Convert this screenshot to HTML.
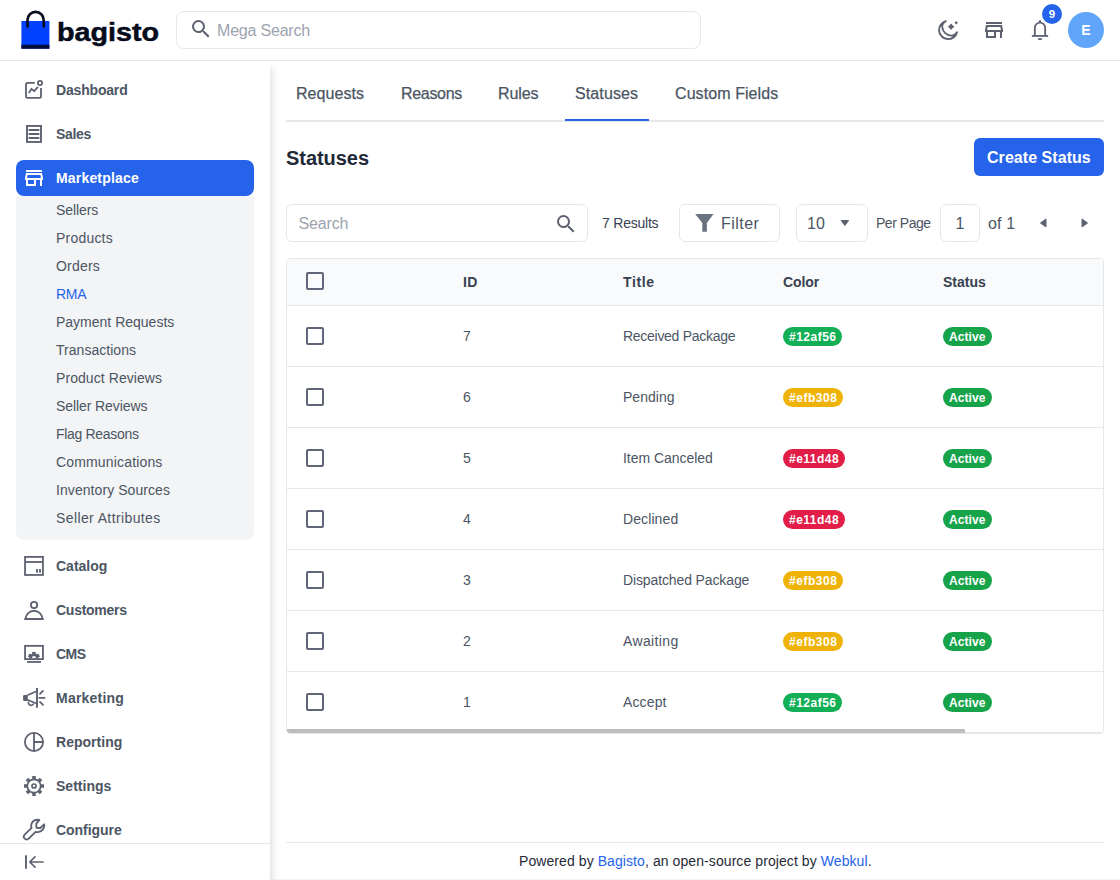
<!DOCTYPE html>
<html lang="en">
<head>
<meta charset="utf-8">
<title>Statuses - RMA - Marketplace</title>
<style>
*{box-sizing:border-box;margin:0;padding:0}
html,body{width:1120px;height:880px;overflow:hidden;background:#fff}
body{font-family:"Liberation Sans",sans-serif;font-size:14px;color:#4b5563;position:relative}
a{text-decoration:none;color:inherit}
.abs{position:absolute;white-space:nowrap}
.header{position:absolute;left:0;top:0;width:1120px;height:61px;background:#fff;border-bottom:1px solid #e5e7eb;z-index:5}
.logo-text{position:absolute;left:56.5px;top:11.5px;font-weight:700;font-size:26px;line-height:40px;color:#060c1b;-webkit-text-stroke:0.5px #060c1b;transform:scaleX(1.105);transform-origin:0 0}
.mega{position:absolute;left:176px;top:11px;width:525px;height:38px;border:1px solid #e5e7eb;border-radius:8px}
.mega span{position:absolute;left:40px;top:8.5px;font-size:16px;line-height:20px;color:#9ca3af}
.hicon{position:absolute;top:18px;width:24px;height:24px}
.badge9{position:absolute;left:1042px;top:4px;width:20px;height:20px;border-radius:10px;background:#2563eb;color:#fff;font-weight:700;font-size:11.5px;line-height:21px;text-align:center}
.avatar{position:absolute;left:1068px;top:12px;width:36px;height:36px;border-radius:18px;background:#60a5fa;color:#fff;font-weight:700;font-size:14px;line-height:36px;text-align:center}
.sidebar{position:absolute;left:0;top:61px;width:270px;height:819px;background:#fff;box-shadow:0 8px 10px 0 rgba(0,0,0,.2);z-index:4}
.nav-item{position:absolute;left:16px;width:238px;height:36px;border-radius:8px;font-weight:700;font-size:14px;line-height:36px;color:#4b5563}
.nav-item span{position:absolute;left:40px;top:0;white-space:nowrap}
.nav-item svg{position:absolute;left:6px;top:6px}
.nav-item.active{background:#2563eb;color:#fff}
.sub{position:absolute;left:16px;top:196px;width:238px;height:344px;background:#f3f4f6;border-radius:0 0 8px 8px}
.sub a{position:absolute;left:40px;font-size:14px;line-height:20px;color:#4b5563;white-space:nowrap}
.sub a.cur{color:#2563eb}
.collapse{position:absolute;left:0;top:843px;width:270px;height:37px;border-top:1px solid #e5e7eb;background:#fff}
.tabs{position:absolute;left:286px;top:69px;width:818px;height:53px;border-bottom:2px solid #e5e7eb}
.tab{position:absolute;top:0;height:52px;padding:0 10px;font-size:16px;line-height:50px;color:#4b5563;white-space:nowrap;-webkit-text-stroke:0.25px #4b5563}
.tab.on{border-bottom:2px solid #2563eb;width:84px}
h1{position:absolute;left:286px;top:143.8px;font-size:20px;line-height:28px;font-weight:700;color:#1f2937;white-space:nowrap}
.btn{position:absolute;left:974px;top:138px;width:130px;height:38px;border-radius:6px;background:#2563eb;color:#fff;font-weight:700;font-size:16px;line-height:38px;padding-left:13px;padding-top:1px;white-space:nowrap}
.box{position:absolute;top:204px;height:38px;border:1px solid #e5e7eb;border-radius:6px;background:#fff}
.t16{font-size:16px;line-height:24px}
.t14{font-size:14px;line-height:20px}
.table{position:absolute;left:286px;top:258px;width:818px;height:476px;border:1px solid #e5e7eb;border-radius:4px;overflow:hidden;background:#fff}
.thead{position:absolute;left:0;top:0;width:816px;height:47px;background:#f9fafb;border-bottom:1px solid #e5e7eb;font-weight:700;color:#374151}
.row{position:absolute;left:0;width:816px;height:61px;border-bottom:1px solid #e5e7eb;color:#4b5563}
.cell{position:absolute;white-space:nowrap;font-size:14px;line-height:20px}
.cb{position:absolute;left:19px;width:18px;height:18px;border:2px solid #60657a;border-radius:2px;background:#fff}
.pill{position:absolute;height:19px;border-radius:9.5px;color:#fff;font-weight:700;font-size:12px;line-height:20.4px;padding:0 0 0 6px;white-space:nowrap}
.thumb{position:absolute;left:0;top:470px;width:678px;height:4px;background:#bdbdbd}
.footer{position:absolute;left:286px;top:842px;width:818px;height:38px;border-top:1px solid #e5e7eb;font-size:14px;line-height:20px;color:#1f2937}
.footer span{position:absolute;left:233px;top:8px;white-space:nowrap}
.footer a{color:#2563eb}
</style>
</head>
<body>
<div class="header">
<svg style="position:absolute;left:20px;top:8px" width="32" height="44" viewBox="0 0 32 44"><rect x="1.4" y="13" width="28" height="27.7" fill="#0041ff"/><rect x="1.4" y="36.7" width="28" height="4" fill="#060c3b"/><path d="M7.5 18.5V12a8.1 8.1 0 0 1 16.2 0v6.5" fill="none" stroke="#060c1b" stroke-width="2.6" stroke-linecap="round"/></svg>
<div class="logo-text">bagisto</div>
<div class="mega"><svg style="position:absolute;left:11.6px;top:5px" width="24" height="24" viewBox="0 0 24 24"><path d="M15.5 14h-.79l-.28-.27A6.471 6.471 0 0 0 16 9.5 6.5 6.5 0 1 0 9.5 16c1.61 0 3.09-.59 4.23-1.57l.27.28v.79l5 4.99L20.49 19l-4.99-5zm-6 0C7.01 14 5 11.99 5 9.5S7.01 5 9.5 5 14 7.01 14 9.5 11.99 14 9.5 14z" fill="#5d6170"/></svg><span style="letter-spacing:-0.2px">Mega Search</span></div>
<svg class="hicon" style="left:936px" viewBox="0 0 24 24"><path d="M9.8 3.2A9.1 9.1 0 1 0 21 14.2C19.8 16.6 17.5 17.7 15.2 17.6A9.18 9.18 0 0 1 6.2 8.7C6.1 6.5 7.6 4.3 9.8 3.2z" fill="none" stroke="#5d6170" stroke-width="1.9" stroke-linejoin="round"/><path d="M15.1 5.5Q16.3 7.6 18.4 8.8 16.3 10 15.1 12.1 13.9 10 11.8 8.8 13.9 7.6 15.1 5.5z" fill="#5d6170"/><path d="M20.2 3l1.7 1.7-1.7 1.7-1.7-1.7z" fill="#5d6170"/></svg>
<div class="hicon" style="left:982px"><svg width="24" height="24" viewBox="0 0 24 24"><path d="M18.36 9l.6 3H5.04l.6-3h12.72M20 4H4v2h16V4zm0 3H4l-1 5v2h1v6h10v-6h4v6h2v-6h1v-2l-1-5zM6 18v-4h6v4H6z" fill="#5d6170"/></svg></div>
<svg class="hicon" style="left:1028px" viewBox="0 0 24 24"><path d="M3.9 17.95h16.2" fill="none" stroke="#5d6170" stroke-width="1.8"/><path d="M6.85 17.9V9.8a5.15 5.15 0 0 1 10.3 0v8.1" fill="none" stroke="#5d6170" stroke-width="1.8"/><path d="M11 4.8V3.1a1 1 0 0 1 2 0v1.7z" fill="#5d6170"/><path d="M9.7 20.2h4.6a2.3 2.1 0 0 1-4.6 0z" fill="#5d6170"/></svg>
<div class="badge9">9</div><div class="avatar">E</div>
</div>
<div class="sidebar">
<a class="nav-item" style="top:11px"><svg width="24" height="24" viewBox="0 0 24 24"><path d="M12.8 4.9H5.6A1.6 1.6 0 0 0 4 6.5v11.8a1.6 1.6 0 0 0 1.6 1.6h11.8a1.6 1.6 0 0 0 1.6-1.6V9.9" stroke="#5d6170" fill="none" stroke-width="1.8" stroke-linecap="butt"/><circle cx="18" cy="5" r="2.1" stroke="#5d6170" fill="none" stroke-width="1.8"/><path d="M7.3 14.2l2.1-3.1 2.9 2 3-3.6" stroke="#5d6170" fill="none" stroke-width="1.8" stroke-linecap="square" stroke-linejoin="miter"/></svg><span style="letter-spacing:-0.18px">Dashboard</span></a>
<a class="nav-item" style="top:55px"><svg width="24" height="24" viewBox="0 0 24 24"><rect x="5" y="3.95" width="14" height="16" stroke="#5d6170" fill="none" stroke-width="1.9"/><path d="M7.3 8h9.4M7.3 12h9.4M7.3 16h9.4" stroke="#5d6170" fill="none" stroke-width="1.8" stroke-linecap="round" stroke-linejoin="round"/></svg><span style="letter-spacing:-0.35px">Sales</span></a>
<a class="nav-item active" style="top:99px"><svg width="24" height="24" viewBox="0 0 24 24"><path d="M18.36 9l.6 3H5.04l.6-3h12.72M20 4H4v2h16V4zm0 3H4l-1 5v2h1v6h10v-6h4v6h2v-6h1v-2l-1-5zM6 18v-4h6v4H6z" fill="#fff"/></svg><span style="letter-spacing:0.18px">Marketplace</span></a>
<a class="nav-item" style="top:487px"><svg width="24" height="24" viewBox="0 0 24 24"><rect x="3.05" y="2.9" width="17.9" height="18.05" stroke="#5d6170" fill="none" stroke-width="1.8"/><path d="M3 8h18" stroke="#5d6170" fill="none" stroke-width="1.8"/><path d="M15 15.1v3.7M18 15.1v3.7" stroke="#5d6170" fill="none" stroke-width="1.8"/></svg><span style="letter-spacing:0px">Catalog</span></a>
<a class="nav-item" style="top:531px"><svg width="24" height="24" viewBox="0 0 24 24"><circle cx="12.05" cy="7" r="3.15" stroke="#5d6170" fill="none" stroke-width="1.8"/><path d="M3.2 21C4 16.3 7.5 12.75 12 12.75S20 16.3 20.8 21z" stroke="#5d6170" fill="none" stroke-width="1.8" stroke-linejoin="miter"/></svg><span style="letter-spacing:-0.26px">Customers</span></a>
<a class="nav-item" style="top:575px"><svg width="24" height="24" viewBox="0 0 24 24"><rect x="3.05" y="3.85" width="17.9" height="13.25" stroke="#5d6170" fill="none" stroke-width="1.8"/><path d="M5 19.95h14" stroke="#5d6170" fill="none" stroke-width="1.8"/><clipPath id="cmsclip"><rect x="3.9" y="4.7" width="16.2" height="11.7"/></clipPath><g clip-path="url(#cmsclip)"><circle cx="11.95" cy="15.95" r="3.2" fill="none" stroke="#5d6170" stroke-width="2.4"/><rect x="10.15" y="9.95" width="3.6" height="2.4" fill="#5d6170"/><rect x="10.15" y="9.95" width="3.6" height="2.4" fill="#5d6170" transform="rotate(-60 11.95 15.95)"/><rect x="10.15" y="9.95" width="3.6" height="2.4" fill="#5d6170" transform="rotate(60 11.95 15.95)"/></g></svg><span style="letter-spacing:-0.54px">CMS</span></a>
<a class="nav-item" style="top:619px"><svg width="24" height="24" viewBox="0 0 24 24"><path d="M15 2v19.8" stroke="#5d6170" fill="none" stroke-width="1.9"/><path d="M14.6 5.3L5.3 9.3M5.3 13.8l9.3 3.6" stroke="#5d6170" fill="none" stroke-width="1.6"/><rect x="1.1" y="9.1" width="4.7" height="5.8" rx="1" fill="#5d6170"/><path d="M6.4 15.5c-.2 2.3.9 3.8 2.5 3.9 1.5.1 2.4-.7 2.9-1.9" stroke="#5d6170" fill="none" stroke-width="1.6"/><path d="M17.3 11.9h5.3M18 7.8l3-2.9M18 15.9l3 2.9" stroke="#5d6170" fill="none" stroke-width="1.8" stroke-linecap="round" stroke-linejoin="round"/></svg><span style="letter-spacing:0.22px">Marketing</span></a>
<a class="nav-item" style="top:663px"><svg width="24" height="24" viewBox="0 0 24 24"><circle cx="12" cy="12" r="9.1" stroke="#5d6170" fill="none" stroke-width="1.8"/><path d="M12 2.9v18.2M12 12h9.1" stroke="#5d6170" fill="none" stroke-width="1.8"/></svg><span style="letter-spacing:0.03px">Reporting</span></a>
<a class="nav-item" style="top:707px"><svg width="24" height="24" viewBox="0 0 24 24"><circle cx="12" cy="12" r="6.7" stroke="#5d6170" fill="none" stroke-width="1.7"/><rect x="10.25" y="2" width="3.5" height="3.3" fill="#5d6170" transform="rotate(0 12 12)"/><rect x="10.25" y="2" width="3.5" height="3.3" fill="#5d6170" transform="rotate(45 12 12)"/><rect x="10.25" y="2" width="3.5" height="3.3" fill="#5d6170" transform="rotate(90 12 12)"/><rect x="10.25" y="2" width="3.5" height="3.3" fill="#5d6170" transform="rotate(135 12 12)"/><rect x="10.25" y="2" width="3.5" height="3.3" fill="#5d6170" transform="rotate(180 12 12)"/><rect x="10.25" y="2" width="3.5" height="3.3" fill="#5d6170" transform="rotate(225 12 12)"/><rect x="10.25" y="2" width="3.5" height="3.3" fill="#5d6170" transform="rotate(270 12 12)"/><rect x="10.25" y="2" width="3.5" height="3.3" fill="#5d6170" transform="rotate(315 12 12)"/><circle cx="12" cy="12" r="2" stroke="#5d6170" fill="none" stroke-width="1.7"/></svg><span style="letter-spacing:0.02px">Settings</span></a>
<a class="nav-item" style="top:751px"><svg width="24" height="24" viewBox="0 0 24 24"><path d="M17.3 1.9c-3.3-.5-6.3.8-7.5 3.3-.7 1.5-.8 3.1-.3 4.7L2.7 16.7c-1.1 1.1-1.1 2.9 0 4s2.9 1.1 4 0l6.9-6.9c2.6.8 5.5 0 7.2-2.1 1.2-1.5 1.7-3.4 1.3-5.4l-3.7 3.7-3.9-.2-.3-3.9z" stroke="#5d6170" fill="none" stroke-width="1.85" stroke-linejoin="round"/></svg><span style="letter-spacing:-0.05px">Configure</span></a>
<div class="sub" style="top:135px">
<a style="top:4px;letter-spacing:-0.08px">Sellers</a>
<a style="top:32px;letter-spacing:0.21px">Products</a>
<a style="top:60px;letter-spacing:0.21px">Orders</a>
<a class="cur" style="top:88px;letter-spacing:-0.27px">RMA</a>
<a style="top:116px;letter-spacing:-0px">Payment Requests</a>
<a style="top:144px;letter-spacing:0.03px">Transactions</a>
<a style="top:172px;letter-spacing:0.07px">Product Reviews</a>
<a style="top:200px;letter-spacing:-0.09px">Seller Reviews</a>
<a style="top:228px;letter-spacing:-0.31px">Flag Reasons</a>
<a style="top:256px;letter-spacing:0.16px">Communications</a>
<a style="top:284px;letter-spacing:0.07px">Inventory Sources</a>
<a style="top:312px;letter-spacing:0.39px">Seller Attributes</a>
</div>
<div class="collapse" style="top:782px"><svg style="position:absolute;left:22px;top:6px" width="24" height="24" viewBox="0 0 24 24"><path d="M3.95 5.2v13.6" stroke="#5d6170" stroke-width="1.9" fill="none"/><path d="M21 12H8M13 6.8L7.8 12l5.2 5.2" stroke="#5d6170" stroke-width="1.7" fill="none" stroke-linecap="round" stroke-linejoin="round"/></svg></div>
</div>
<div class="tabs">
<a class="tab" style="left:0px;letter-spacing:0.07px">Requests</a>
<a class="tab" style="left:105px;letter-spacing:-0.31px">Reasons</a>
<a class="tab" style="left:202px;letter-spacing:-0.12px">Rules</a>
<a class="tab on" style="left:279px;letter-spacing:0.11px">Statuses</a>
<a class="tab" style="left:379px;letter-spacing:0.08px">Custom Fields</a>
</div>
<h1 style="letter-spacing:-0.05px">Statuses</h1>
<a class="btn" style="letter-spacing:0.05px">Create Status</a>
<div class="box" style="left:286px;width:302px"><span class="abs t16" style="left:11.5px;top:6.5px;color:#9ca3af;letter-spacing:-0.14px">Search</span><svg style="position:absolute;left:267px;top:7px" width="24" height="24" viewBox="0 0 24 24"><path d="M15.5 14h-.79l-.28-.27A6.471 6.471 0 0 0 16 9.5 6.5 6.5 0 1 0 9.5 16c1.61 0 3.09-.59 4.23-1.57l.27.28v.79l5 4.99L20.49 19l-4.99-5zm-6 0C7.01 14 5 11.99 5 9.5S7.01 5 9.5 5 14 7.01 14 9.5 11.99 14 9.5 14z" fill="#5d6170"/></svg></div>
<span class="abs t14" style="left:602px;top:213px;color:#374151;letter-spacing:-0.22px">7 Results</span>
<div class="box" style="left:679px;width:101px"><svg style="position:absolute;left:12px;top:5px" width="24" height="24" viewBox="0 0 24 24"><path d="M3.2 3.9h18.3l-6.6 9.1v8.7h-4.6v-8.7z" fill="#6b7280"/></svg><span class="abs t16" style="left:41px;top:6.7px;color:#4b5563;letter-spacing:0.45px">Filter</span></div>
<div class="box" style="left:796px;width:72px"><span class="abs t16" style="left:10px;top:6.7px;color:#4b5563">10</span><svg style="position:absolute;left:43px;top:13px" width="12" height="12" viewBox="0 0 12 12"><path d="M1.2 2.5h7.4L4.9 7.5z" fill="#5d6170" stroke="#5d6170" stroke-width="1" stroke-linejoin="round"/></svg></div>
<span class="abs t14" style="left:876px;top:213px;color:#4b5563;letter-spacing:-0.47px">Per Page</span>
<div class="box" style="left:940px;width:40px"><span class="abs t16" style="left:0;width:38px;top:6.7px;text-align:center;color:#4b5563">1</span></div>
<span class="abs t16" style="left:988px;top:211.7px;color:#4b5563;letter-spacing:0.17px">of 1</span>
<svg style="position:absolute;left:1037px;top:217px" width="12" height="12" viewBox="0 0 12 12"><path d="M9 2v8L3.5 6z" fill="#5d6170" stroke="#5d6170" stroke-width="1" stroke-linejoin="round"/></svg>
<svg style="position:absolute;left:1079px;top:217px" width="12" height="12" viewBox="0 0 12 12"><path d="M3 2v8L8.5 6z" fill="#5d6170" stroke="#5d6170" stroke-width="1" stroke-linejoin="round"/></svg>
<div class="table">
<div class="thead"><span class="cb" style="top:13px;background:transparent"></span><span class="cell" style="left:176px;top:13px;letter-spacing:0.31px">ID</span><span class="cell" style="left:336px;top:13px;letter-spacing:0.6px">Title</span><span class="cell" style="left:496px;top:13px;letter-spacing:-0.08px">Color</span><span class="cell" style="left:656px;top:13px;letter-spacing:0px">Status</span></div>
<div class="row" style="top:47px"><span class="cb" style="top:21px"></span><span class="cell" style="left:176px;top:20px">7</span><span class="cell" style="left:336px;top:20px;letter-spacing:-0.28px">Received Package</span><span class="pill" style="left:496px;top:21px;width:59px;background:#12af56;letter-spacing:0.5px">#12af56</span><span class="pill" style="left:656px;top:21px;width:49px;background:#16a34a;letter-spacing:0.06px">Active</span></div>
<div class="row" style="top:108px"><span class="cb" style="top:21px"></span><span class="cell" style="left:176px;top:20px">6</span><span class="cell" style="left:336px;top:20px;letter-spacing:0.03px">Pending</span><span class="pill" style="left:496px;top:21px;width:60px;background:#efb308;letter-spacing:0.52px">#efb308</span><span class="pill" style="left:656px;top:21px;width:49px;background:#16a34a;letter-spacing:0.06px">Active</span></div>
<div class="row" style="top:169px"><span class="cb" style="top:21px"></span><span class="cell" style="left:176px;top:20px">5</span><span class="cell" style="left:336px;top:20px;letter-spacing:-0.03px">Item Canceled</span><span class="pill" style="left:496px;top:21px;width:62px;background:#e11d48;letter-spacing:0.49px">#e11d48</span><span class="pill" style="left:656px;top:21px;width:49px;background:#16a34a;letter-spacing:0.06px">Active</span></div>
<div class="row" style="top:230px"><span class="cb" style="top:21px"></span><span class="cell" style="left:176px;top:20px">4</span><span class="cell" style="left:336px;top:20px;letter-spacing:0.1px">Declined</span><span class="pill" style="left:496px;top:21px;width:62px;background:#e11d48;letter-spacing:0.49px">#e11d48</span><span class="pill" style="left:656px;top:21px;width:49px;background:#16a34a;letter-spacing:0.06px">Active</span></div>
<div class="row" style="top:291px"><span class="cb" style="top:21px"></span><span class="cell" style="left:176px;top:20px">3</span><span class="cell" style="left:336px;top:20px;letter-spacing:-0.12px">Dispatched Package</span><span class="pill" style="left:496px;top:21px;width:60px;background:#efb308;letter-spacing:0.52px">#efb308</span><span class="pill" style="left:656px;top:21px;width:49px;background:#16a34a;letter-spacing:0.06px">Active</span></div>
<div class="row" style="top:352px"><span class="cb" style="top:21px"></span><span class="cell" style="left:176px;top:20px">2</span><span class="cell" style="left:336px;top:20px;letter-spacing:0.36px">Awaiting</span><span class="pill" style="left:496px;top:21px;width:60px;background:#efb308;letter-spacing:0.52px">#efb308</span><span class="pill" style="left:656px;top:21px;width:49px;background:#16a34a;letter-spacing:0.06px">Active</span></div>
<div class="row" style="top:413px"><span class="cb" style="top:21px"></span><span class="cell" style="left:176px;top:20px">1</span><span class="cell" style="left:336px;top:20px;letter-spacing:0.13px">Accept</span><span class="pill" style="left:496px;top:21px;width:59px;background:#12af56;letter-spacing:0.5px">#12af56</span><span class="pill" style="left:656px;top:21px;width:49px;background:#16a34a;letter-spacing:0.06px">Active</span></div>
<div class="thumb"></div>
</div>
<div class="footer"><span style="letter-spacing:0.08px">Powered by <a>Bagisto</a>, an open-source project by <a>Webkul</a>.</span></div>
<div style="position:absolute;left:270px;top:879px;width:850px;height:1px;background:#f3f4f6"></div>
</body>
</html>
